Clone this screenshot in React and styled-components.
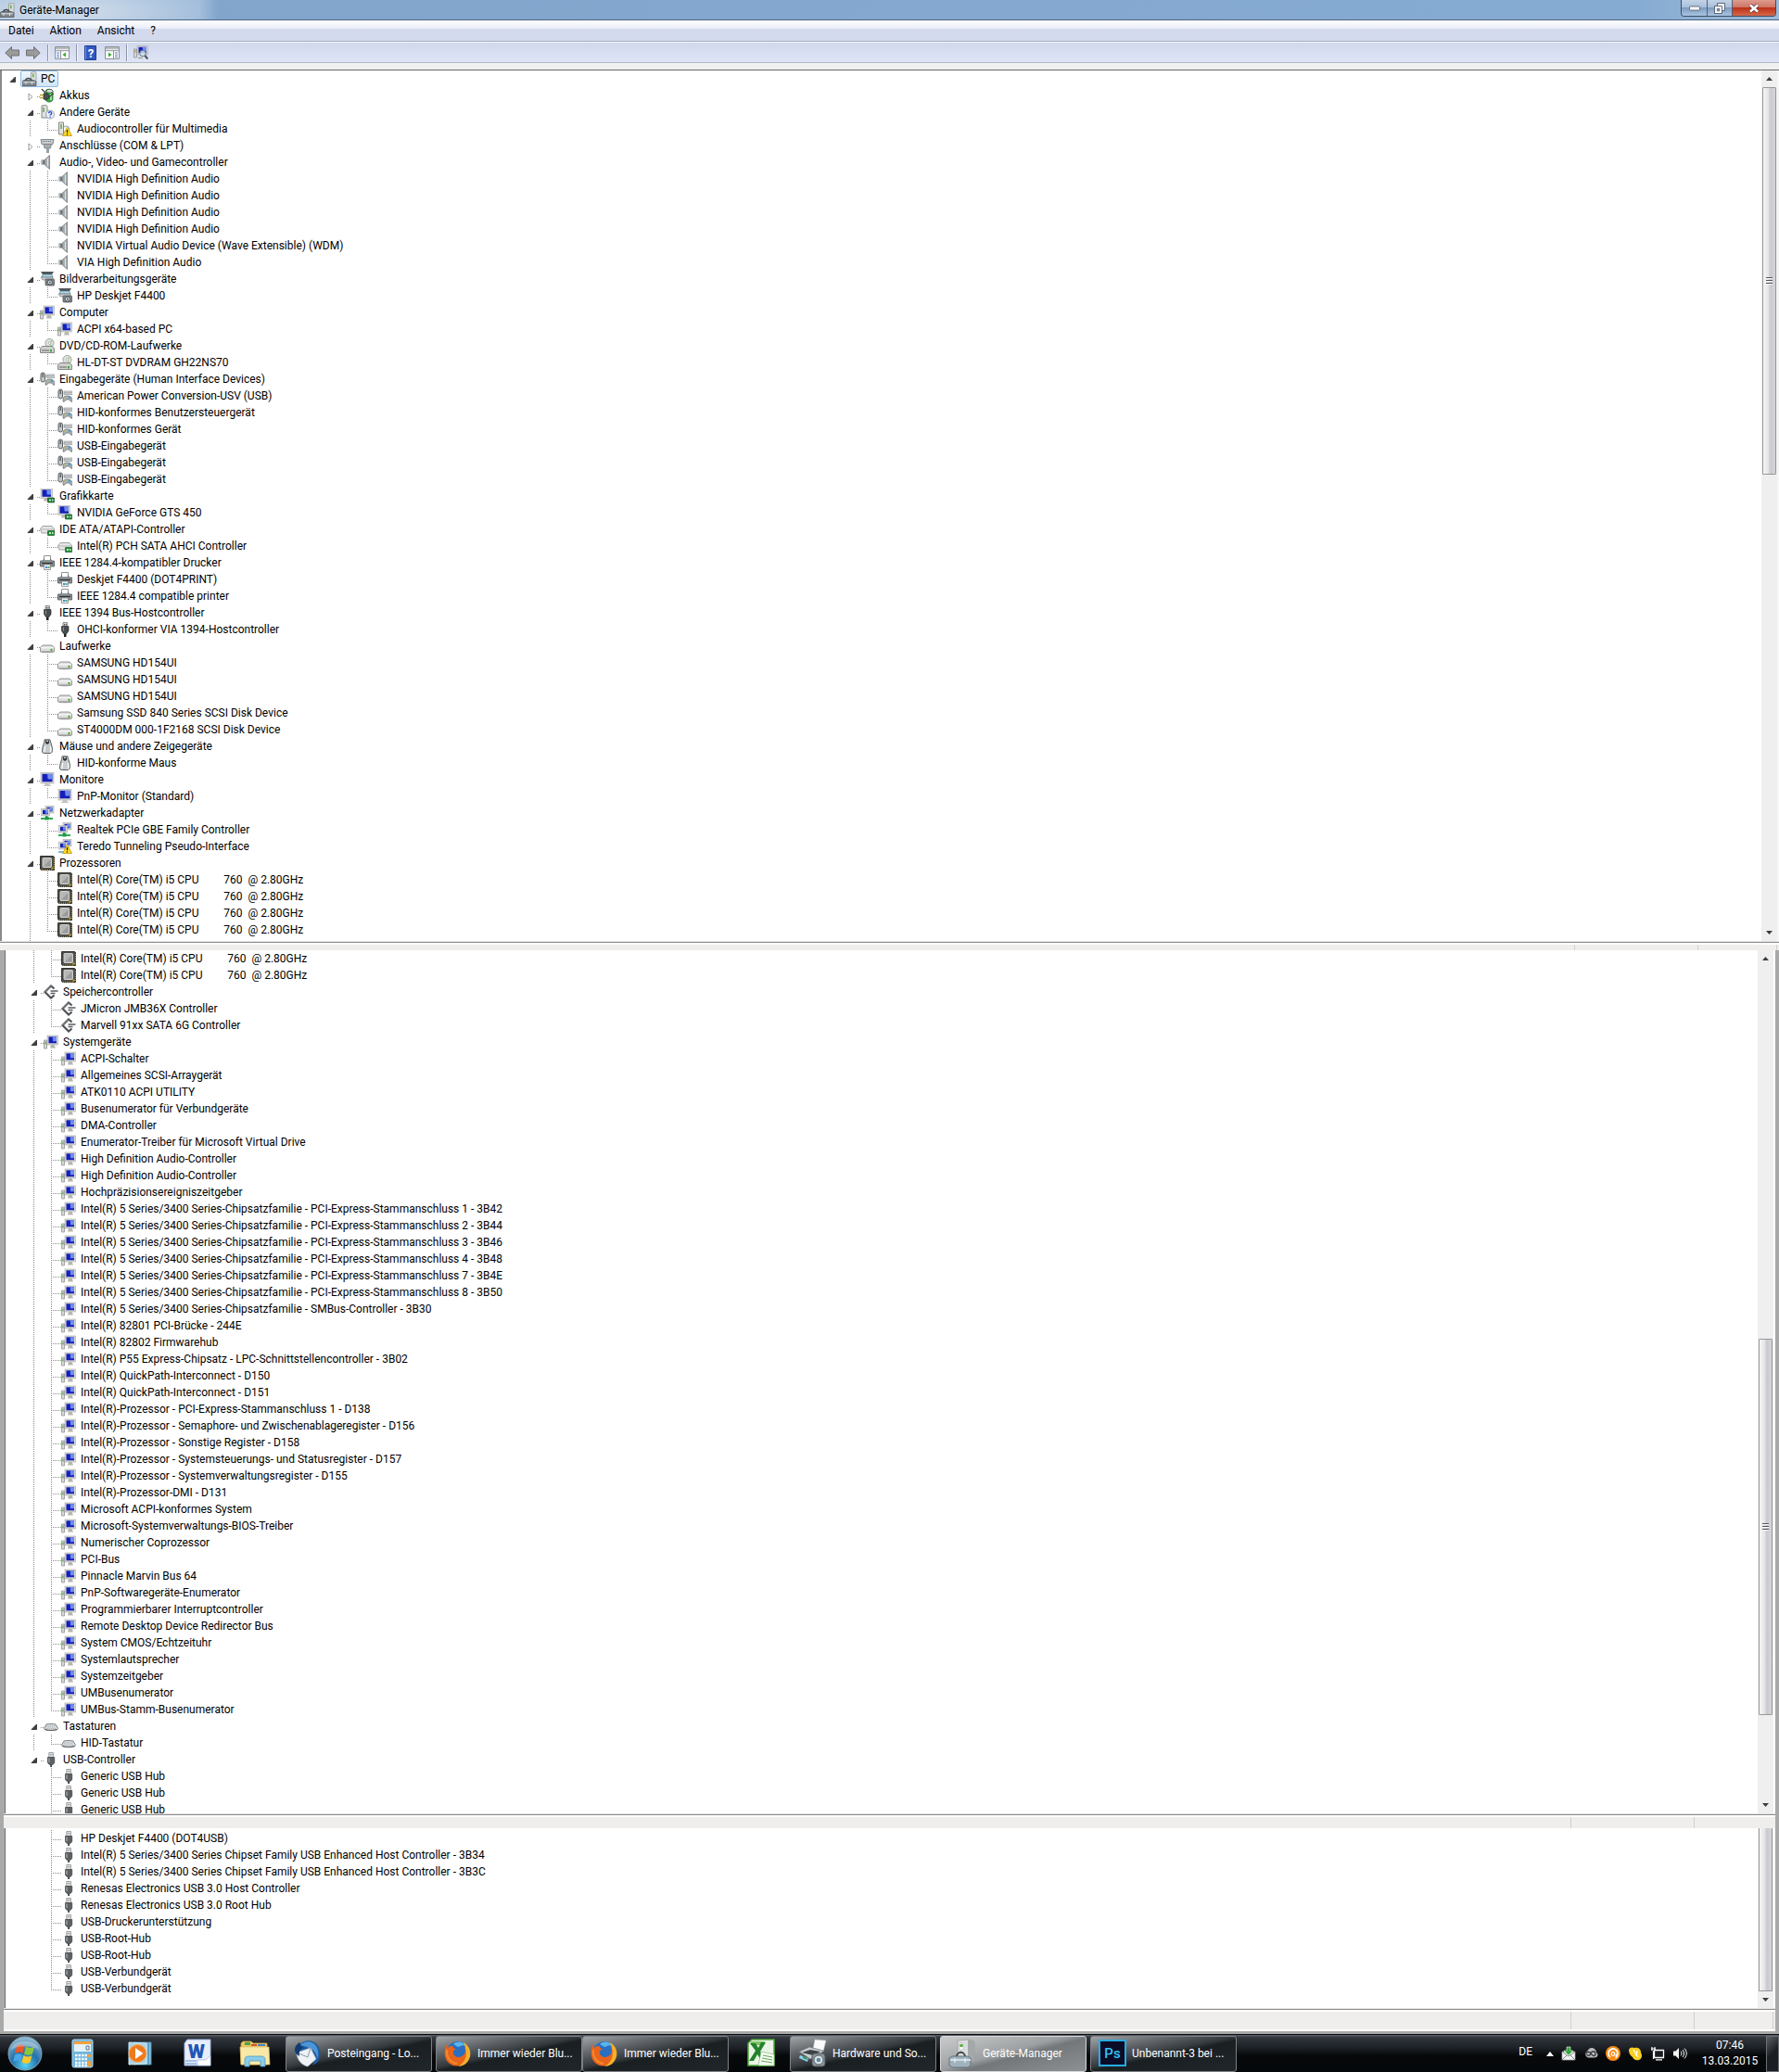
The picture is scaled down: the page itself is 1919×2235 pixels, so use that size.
import React from "react";
import styled, {createGlobalStyle} from "styled-components";

const GlobalStyle = createGlobalStyle`
  * {
    box-sizing: border-box;
  }

  body {
    margin: 0;
    background: #a9a9a9;
    font-family: Roboto, "Noto Sans", sans-serif;
    font-size: 12px;
    color: #000000;
  }

  button {
    font: inherit;
    color: inherit;
    border: 0;
    padding: 0;
    background: none;
  }

  svg {
    display: block;
    flex: none;
  }
`;

const Desktop = styled.div`
  display: flex;
  flex-direction: column;
  min-height: 100vh;
`;

/* ---------- window frame ---------- */

const TitleBar = styled.header`
  display: flex;
  align-items: center;
  height: 22px;
  padding-right: 3px;
  border-bottom: 1px solid #4c6484;
  background: radial-gradient(ellipse 150px 30px at 70px 12px, #cbd9e9 20%, transparent 100%),
  linear-gradient(to right, #a8c1dd 0, #a3bedc 215px, #82a5cc 235px, #86abd2 92%, #9dbad9 100%);
`;

const Title = styled.h1`
  flex: 1;
  margin: 0;
  padding-left: 5px;
  font-size: 12px;
  font-weight: 400;
  line-height: 20px;
`;

const CaptionButtons = styled.div`
  display: flex;
  align-self: flex-start;
  height: 18px;
  border: 1px solid #3d4c63;
  border-top: 0;
  border-radius: 0 0 4px 4px;
  overflow: hidden;
`;

const CaptionButton = styled.button`
  display: flex;
  align-items: center;
  justify-content: center;
  width: ${props => props.$close ? 47 : 27}px;
  background: ${props => props.$close
    ? 'linear-gradient(#dd9c8f 0, #cf7566 45%, #bd3218 50%, #d4694a 100%)'
    : 'linear-gradient(#c2d3e6 0, #a9c0da 45%, #7f9cc0 50%, #a9c4e2 100%)'};

  & + & {
    border-left: 1px solid #4f6078;
  }
`;

const MenuBar = styled.nav`
  display: flex;
  align-items: center;
  gap: 17px;
  height: 23px;
  padding-left: 9px;
  border-bottom: 1px solid #a5acbd;
  background: linear-gradient(#ffffff 0, #e9edf8 9px, #d3daee 9px, #d3daee 100%);
`;

const MenuItem = styled.button`
  line-height: 20px;
`;

const ToolBar = styled.div`
  display: flex;
  align-items: center;
  height: 23px;
  padding-left: 5px;
  gap: 7px;
  border-top: 1px solid #f6f8fc;
  border-bottom: 1px solid #b1b8c6;
  background: linear-gradient(#d1d8ec, #dfe5f7);
`;

const ToolSeparator = styled.span`
  width: 1px;
  height: 18px;
  background: #8d93a1;
  box-shadow: 1px 0 0 #f4f6fb;
`;

const FrameGap = styled.div`
  height: 8px;
  background: #f0f0f0;
  border-bottom: 1px solid #696969;
`;

/* ---------- tree panes ---------- */

const Pane = styled.section`
  display: flex;
  flex: ${props => props.$grow ? 1 : 'none'};
  margin: ${props => props.$inset ? '0 4px 0 5px' : '0'};
  border-left: ${props => props.$inset ? 1 : 2}px solid ${props => props.$inset ? '#6f6f6f' : '#8a8a8a'};
  border-right: ${props => props.$inset ? 1 : 2}px solid #f6f6f6;
  background: #ffffff;
`;

const Tree = styled.ul`
  flex: 1;
  min-width: 0;
  margin: 0;
  padding: ${props => props.$top || 0}px 0 0 0;
  list-style: none;
`;

const Row = styled.li`
  display: flex;
  align-items: flex-start;
  height: ${props => props.$height || 18}px;
  padding-left: ${props => props.$root ? 4 : 23}px;
`;

const dotsDown = 'repeating-linear-gradient(to bottom, #8c8c8c 0 1px, transparent 1px 2px)';
const dotsRight = 'repeating-linear-gradient(to right, #8c8c8c 0 1px, transparent 1px 2px)';

const Guide = styled.span`
  flex: none;
  width: 19px;
  height: 18px;
  background: ${props => props.$line ? `${dotsDown} 7px 0 / 1px 100% no-repeat` : 'none'};
`;

const Branch = styled.span`
  flex: none;
  width: 18px;
  height: 18px;
  background: ${dotsDown} 7px 0 / 1px ${props => props.$last ? '11px' : '100%'} no-repeat,
  ${dotsRight} 9px 10px / 9px 1px no-repeat;
`;

const Stub = styled.span`
  flex: none;
  width: 3px;
  height: 18px;
  background: ${dotsRight} 0 10px / 3px 1px no-repeat;
`;

const Expander = styled.button`
  display: flex;
  align-items: center;
  justify-content: center;
  width: 15px;
  height: 20px;
`;

const Entry = styled.span`
  display: flex;
  align-items: center;
  gap: 5px;
  height: 18px;
  line-height: 18px;
  white-space: pre;
`;

const RootEntry = styled(Entry)`
  gap: 4px;
  margin-left: 1px;
  padding: 0 3px 0 1px;
  border: 1px solid #8db9e0;
  border-radius: 2px;
  background: linear-gradient(#eef6fd, #cfe5f8);
  line-height: 16px;
`;

/* ---------- scroll bar ---------- */

const ScrollBar = styled.div`
  display: flex;
  flex-direction: column;
  width: 17px;
  margin-right: ${props => props.$gap || 0}px;
  padding: 0 1px;
  background: #efefef;
`;

const ScrollArrow = styled.button`
  display: flex;
  align-items: center;
  justify-content: center;
  width: 15px;
  height: 18px;
`;

const Track = styled.span`
  flex: ${props => props.$size} 0 0;
`;

const Thumb = styled.span`
  display: flex;
  flex: ${props => props.$size} 0 0;
  align-items: center;
  justify-content: center;
  border: 1px solid #979797;
  border-top-width: ${props => props.$low ? 0 : 1}px;
  border-radius: 1px;
  background: linear-gradient(to right, #f5f5f5 0, #e6e6e9 40%, #c9c9cf 60%, #d6d6da 100%);
`;

/* both bars sit over the last, half scrolled row of the pane above */
const Edge = styled.div`
  position: relative;
  height: 2px;
  margin: ${props => props.$inset ? '0 4px 0 4px' : '0'};
  background: #e4e4e4;
  border-bottom: 1px solid #8c8c8c;
`;

const Splitter = styled.div`
  position: relative;
  display: flex;
  justify-content: flex-end;
  height: ${props => props.$height}px;
  margin: ${props => props.$inset ? '0 4px 0 4px' : '0'};
  border-top: 2px solid #ffffff;
  border-bottom: ${props => props.$footer ? '2px solid #ffffff' : '0'};
  background: #f0eeed;
  box-shadow: 0 -1px 0 #8c8c8c;
`;

const SplitterCell = styled.span`
  width: ${props => props.$width}px;
  border-left: 1px solid #d2d0cf;
`;

/* ---------- task bar ---------- */

const TaskBar = styled.footer`
  display: flex;
  align-items: center;
  height: 41px;
  margin-top: 3px;
  border-top: 1px solid #0b0d10;
  background: linear-gradient(#5b6067 0, #30353c 3px, #1d2126 14px, #07090b 22px, #05080a 100%);
  color: #ffffff;
`;

const QuickLaunch = styled.div`
  display: flex;
  align-items: center;
  width: 308px;
  padding-left: 8px;
`;

const QuickButton = styled.button`
  display: flex;
  align-items: center;
  justify-content: center;
  width: 62px;
  height: 40px;
`;

const StartButton = styled(QuickButton)`
  width: 38px;
  margin-right: 12px;
`;

const TaskButton = styled.button`
  display: flex;
  align-items: center;
  gap: 6px;
  width: 158px;
  height: 39px;
  margin-right: ${props => props.$stacked ? 0 : 4}px;
  padding-left: 8px;
  border: 1px solid ${props => props.$active ? '#d5d7d9' : '#7d8185'};
  border-radius: 3px;
  background: ${props => props.$active
    ? 'linear-gradient(165deg, #c9cbcc 0, #9da0a2 45%, #74777a 55%, #8e9193 100%)'
    : 'linear-gradient(168deg, #a2a5a8 0, #65696d 25%, #33383c 47%, #1a1f22 53%, #20262a 100%)'};
  white-space: nowrap;
`;

const Tray = styled.div`
  display: flex;
  align-items: center;
  gap: 8px;
  margin-left: auto;
  height: 100%;
`;

const Language = styled.button`
  margin: 0 7px 4px 0;
`;

const Clock = styled.time`
  width: 62px;
  margin-left: 7px;
  text-align: center;
  line-height: 17px;
`;

const ShowDesktop = styled.button`
  width: 14px;
  height: 39px;
  border: 1px solid #6c7075;
  background: linear-gradient(135deg, #5d6166, #1a1d21 50%);
`;

/* ---------- device icons ---------- */

const Svg = ({size = 16, children}) => (
    <svg width={size} height={size} viewBox={`0 0 ${size} ${size}`} aria-hidden="true">{children}</svg>
);

const Warning = () => (
    <g>
        <path d="M10.500 6l5 9.500h-10z" fill="#ffdd22" stroke="#b58a00" strokeWidth=".7"/>
        <path d="M10.500 9v3.300M10.500 13.300v1.200" stroke="#2a2200" strokeWidth="1.300"/>
    </g>
);

const Screen = ({x, y, w, h}) => (
    <g>
        <rect x={x} y={y} width={w} height={h} fill="#d9d9d4" stroke="#a9a9a4" strokeWidth=".6"/>
        <rect x={x + 1.5} y={y + 1.3} width={w - 3} height={h - 3} fill="#1420b8"/>
        <path d={`M${x + w * .5} ${y + 1.3}h${w * .5 - 1.5}v${h * .5}h-${w * .35}z`} fill="#6f8df0"/>
    </g>
);

const icons = {
    root: <Svg>
        <path d="M9.500 1l4.500-1 1 1v11l-5.500 1z" fill="#dcdedd" stroke="#8b8d8c" strokeWidth=".7"/>
        <path d="M11 2.500l1.500-.3v4l-1.500.3z" fill="#67a84a"/>
        <path d="M3.500 10.500C3.500 6.500 10 6.500 10 10.500" fill="none" stroke="#44484b" strokeWidth="1.400"/>
        <path d="M0 11l1.500-1.500h11L15 11v4.500H0z" fill="#7f8689" stroke="#4b5053" strokeWidth=".7"/>
        <path d="M1 11.800h13M4 11v3M10.500 11v3" stroke="#dfe4e6" strokeWidth="1"/>
    </Svg>,
    battery: <Svg>
        <path d="M6 3c2-3 8-2 8 1v8c0 4-8 4-8 0z" fill="#2fae3d" stroke="#3f5a40" strokeWidth=".8"/>
        <ellipse cx="10.500" cy="3.300" rx="3.500" ry="1.800" fill="#dfe8df" stroke="#4b554b" strokeWidth=".8"/>
        <path d="M12 6v7" stroke="#8be38f" strokeWidth="2"/>
        <path d="M4 6c3-1 6 0 6 3s-2 4-6 3z" fill="#4c4f4c" stroke="#222" strokeWidth=".7"/>
        <path d="M10 9c3 0 2-3 5-3" fill="none" stroke="#333" strokeWidth="1.200"/>
        <path d="M0 7.500h4M0 10.500h4" stroke="#b7a427" strokeWidth="1.300"/>
        <path d="M2 1c1 2 3 1 3 4" fill="none" stroke="#333" strokeWidth="1.200"/>
    </Svg>,
    unknown: <Svg>
        <path d="M2 1l5-.5 1 1V14H2z" fill="#e1e3e1" stroke="#858885"/>
        <path d="M4 3v5" stroke="#5fa641" strokeWidth="1.500"/>
        <circle cx="11" cy="10.500" r="4.500" fill="#e9eef8" stroke="#8a97ad" strokeWidth=".9"/>
        <path d="M9.500 9.200c0-2 3.200-2 3.200 0 0 1.300-1.600 1.200-1.600 2.400M11.100 12.500v1.200" fill="none" stroke="#2244b8"
              strokeWidth="1.200"/>
    </Svg>,
    unknownWarn: <Svg>
        <path d="M1.500 1h5v13h-5z" fill="#e1e3e1" stroke="#858885"/>
        <path d="M4 3v5" stroke="#5fa641" strokeWidth="1.500"/>
        <path d="M7 6c3-2 6-1 6 3" fill="none" stroke="#8a97ad"/>
        <Warning/>
    </Svg>,
    port: <Svg>
        <path d="M1 1.500h14l-1 5H2z" fill="#c7cccf" stroke="#777d80" strokeWidth=".9"/>
        <path d="M3 3.500h10" stroke="#6b7174" strokeDasharray="1 1"/>
        <path d="M4 6.500h8.500l-1 4.500H5z" fill="#a5abae" stroke="#777d80" strokeWidth=".7"/>
        <path d="M7 11h3v5H7z" fill="#9aa0a3"/>
    </Svg>,
    speaker: <Svg>
        <path d="M1.500 5.500h4v5h-4z" fill="#6f7578"/>
        <path d="M5 5.500L10.500.5v15L5 10.500z" fill="#a2a8ab" stroke="#6d7376" strokeWidth=".7"/>
        <path d="M8.500 3.500v9" stroke="#dfe3e5" strokeWidth="1.300"/>
        <path d="M2.500 6v4" stroke="#b9bec0"/>
    </Svg>,
    imaging: <Svg>
        <path d="M1 0h14l-2 3H3z" fill="#4f5558"/>
        <path d="M3 3h10l1 3H2z" fill="#a9d7ee" stroke="#5d7380" strokeWidth=".6"/>
        <path d="M1 6h13v3H3z" fill="#c7cbcd" stroke="#777" strokeWidth=".6"/>
        <rect x="6" y="8" width="9.500" height="7" rx="1" fill="#7d8589" stroke="#464b4e" strokeWidth=".7"/>
        <circle cx="10.800" cy="11.500" r="2.500" fill="#e7edf0" stroke="#333" strokeWidth=".8"/>
        <circle cx="10.800" cy="11.500" r="1" fill="#2a4e70"/>
    </Svg>,
    computer: <Svg>
        <Screen x={4} y={1} w={11.5} h={10}/>
        <path d="M8 11h3.500l1.500 3.500H7z" fill="#b6b6b0"/>
        <path d="M.5 6h3v9h-3z" fill="#d6d8d6" stroke="#888" strokeWidth=".7"/>
        <path d="M2 7.500v3" stroke="#4fa83a" strokeWidth="1.200"/>
    </Svg>,
    disc: <Svg>
        <circle cx="10.500" cy="5" r="4.600" fill="#dfe3de" stroke="#8f938f" strokeWidth=".8"/>
        <path d="M10.500 5l3-3M10.500 5l2 3.500" stroke="#9fcf8c" strokeWidth="1.200"/>
        <circle cx="10.500" cy="5" r="1.300" fill="#fff" stroke="#999" strokeWidth=".6"/>
        <path d="M.5 11l2-2.500h11l2 2.500v4.500H.5z" fill="#cdd0cd" stroke="#6f726f" strokeWidth=".8"/>
        <path d="M2 13h8" stroke="#666"/>
        <path d="M12 12v2.500" stroke="#3aa83a" strokeWidth="2"/>
    </Svg>,
    hid: <Svg>
        <rect x="1" y="1" width="4.500" height="10" rx="2.200" fill="#c5c9cc" stroke="#565b5e"/>
        <path d="M3.200 2v4" stroke="#333"/>
        <path d="M7 3h9v3.500H7z" fill="#d3d6d8" stroke="#888d90" strokeWidth=".6"/>
        <path d="M7.500 4.800h8" stroke="#777" strokeDasharray="1 1"/>
        <path d="M6 14c0-5 1-6 4.500-6S16 9 16 14c-1 1-2 0-3-2H9c-1 2-2 3-3 2z" fill="#aeb4b8" stroke="#60666a"
              strokeWidth=".7"/>
        <circle cx="12.800" cy="10" r="1.200" fill="#39a0d8"/>
        <circle cx="8.500" cy="10" r="1" fill="#c9b43a"/>
    </Svg>,
    display: <Svg>
        <Screen x={1} y={0} w={12.5} h={10.5}/>
        <path d="M5 10.500h4l1 3H4z" fill="#b6b6b0"/>
        <path d="M8.500 10h7v5h-7z" fill="#1d7a35" stroke="#0f4d1f" strokeWidth=".6"/>
        <path d="M10 11.500h2v2h-2zM13 11.500h1.500v2H13z" fill="#b9e3c0"/>
    </Svg>,
    ide: <Svg>
        <path d="M.5 7.500l2.500-3h10l2.500 3v4.500H2z" fill="#e5e7e6" stroke="#8a8d8c" strokeWidth=".8"/>
        <path d="M1 8h14" stroke="#b1b4b3"/>
        <path d="M8.500 9.500h7v5h-7z" fill="#1d8a35" stroke="#0f4d1f" strokeWidth=".6"/>
        <path d="M10 11h2v2h-2zM13 11h1.500v2H13z" fill="#c9edc0"/>
    </Svg>,
    printer: <Svg>
        <path d="M4.500 .5h7V6h-7z" fill="#fff" stroke="#777" strokeWidth=".8"/>
        <path d="M.5 6h3l1-2h7l1 2h3v6H.5z" fill="#8f9497" stroke="#515558" strokeWidth=".8"/>
        <path d="M5 1h6v4H5z" fill="#fff"/>
        <path d="M2 8.500h12" stroke="#34383a" strokeWidth="1.500"/>
        <path d="M4.500 10h7v5.500h-7z" fill="#eef3f6" stroke="#777" strokeWidth=".7"/>
        <path d="M6 12h2v2H6z" fill="#3c8ad0"/>
        <path d="M8.500 12h2v2h-2z" fill="#48a867"/>
    </Svg>,
    firewire: <Svg>
        <path d="M6 .5h4.500v4H6z" fill="#d6d8d9" stroke="#777" strokeWidth=".8"/>
        <path d="M7.500 2v1.500M9.200 2v1.500" stroke="#444"/>
        <path d="M4.500 4.500h7.500v5l-2 3h-3.500l-2-3z" fill="#484c4f" stroke="#222" strokeWidth=".6"/>
        <path d="M6.500 5.500v4" stroke="#8f9598"/>
        <path d="M7 12.500h2.500V16H7z" fill="#222"/>
    </Svg>,
    drive: <Svg>
        <path d="M.5 9.500L3 7h10l2.500 2.500v4.500c-3 1-12 1-15 0z" fill="#dcdedd" stroke="#7e8180" strokeWidth=".8"/>
        <path d="M1 9.800h14" stroke="#fff"/>
        <path d="M12.500 10.800v2.500" stroke="#54a832" strokeWidth="2"/>
        <path d="M2 14h12" stroke="#8a8d8c" strokeWidth="1"/>
    </Svg>,
    mouse: <Svg>
        <path d="M5 1c2-1.300 4-1.300 6 0 .5 3 2.500 7 2.500 10.500 0 4-2 4-2.500 4H5c-1 0-3 0-2.500-4C3 8 5 4 5 1z" fill="#c7cbcd"
              stroke="#4b5053" strokeWidth=".9"/>
        <path d="M6 1.500h4v3L8 6 6 4.500z" fill="#2b2f32"/>
        <circle cx="8" cy="2.600" r=".8" fill="#fff"/>
        <path d="M6 8c-1 2-1 4-1 6M11.300 8c1 3 .7 5 .2 6.500" fill="none" stroke="#fff" strokeWidth="1.200"/>
    </Svg>,
    monitor: <Svg>
        <Screen x={1} y={.5} w={14} h={11.5}/>
        <path d="M5.500 12h5v2h1.500v1H4v-1h1.500z" fill="#c2c2bc"/>
    </Svg>,
    network: <Svg>
        <Screen x={6} y={.5} w={9} h={7.5}/>
        <Screen x={1.5} y={3.5} w={9} h={7.5}/>
        <path d="M6 11h2.500v2H14v2H1v-2h5z" fill="#2fae54"/>
        <path d="M5.500 12h4v3.500h-4z" fill="#24984a"/>
    </Svg>,
    networkWarn: <Svg>
        <Screen x={6} y={.5} w={9} h={7.5}/>
        <Screen x={1.5} y={3.5} w={9} h={7.5}/>
        <path d="M1 13h7v2H1z" fill="#7fb7d8"/>
        <Warning/>
    </Svg>,
    cpu: <Svg>
        <path d="M.5 .5h14l1 1v14h-14l-1-1z" fill="#4b4b45" stroke="#33332e"/>
        <path d="M2 15.300h12M15.300 3v11" stroke="#c7a83a" strokeWidth="1" strokeDasharray="1 1"/>
        <rect x="3" y="2.500" width="9.500" height="10" rx=".8" fill="#b5b7b6" stroke="#e3e4e3" strokeWidth=".8"/>
        <path d="M4 11.500L11.500 4v7.500z" fill="#9a9c9b"/>
        <path d="M12.500 12.500h2v2h-2z" fill="#c9a62e"/>
    </Svg>,
    storage: <Svg>
        <path d="M11.500 4.500L8 1.500 1.500 8 8 14.500l3.500-3" fill="none" stroke="#4d5154" strokeWidth="2.200"/>
        <path d="M8 1.500L1.500 8" stroke="#8f9497" strokeWidth="1"/>
        <path d="M7.500 7h8M7.500 9.500h5" stroke="#5a5e61" strokeWidth="1.300"/>
    </Svg>,
    keyboard: <Svg>
        <path d="M.5 10.500L3 6c3-.8 7-.8 10 0l2.500 4.500c0 2.500-15 2.500-15 0z" fill="#dfe1e3" stroke="#707578"
              strokeWidth=".9"/>
        <path d="M3.500 7.200h9M3 8.800h10M2 10.400h12" stroke="#94999c" strokeWidth=".8" strokeDasharray="1 1"/>
        <path d="M1 11.500c3 1.300 11 1.300 14 0" fill="none" stroke="#5b6063"/>
    </Svg>,
    usb: <Svg>
        <path d="M5.800 .5h4.600v5H5.800z" fill="#e3e4e5" stroke="#8a8d8f" strokeWidth=".8"/>
        <path d="M7.300 2v1.300M9 2v1.300" stroke="#777" strokeWidth=".8"/>
        <path d="M4.500 5.500h7.200v5.500c0 1-1.500 2.500-2.500 2.500H7c-1 0-2.500-1.500-2.500-2.500z" fill="#5d6164" stroke="#3a3d3f"
              strokeWidth=".7"/>
        <path d="M6 6.500v4.500" stroke="#a9adaf" strokeWidth="1.200"/>
        <path d="M7.200 13.500h1.800V16H7.200z" fill="#3a3d3f"/>
    </Svg>,
};

const OpenArrow = () => (
    <svg width="8" height="8" viewBox="0 0 8 8" aria-hidden="true">
        <path d="M6.500 1v5.500H1z" fill="#404040" stroke="#262626" strokeWidth=".8"/>
    </svg>
);

const ClosedArrow = () => (
    <svg width="6" height="9" viewBox="0 0 6 9" aria-hidden="true">
        <path d="M1 .9l4 3.600-4 3.600z" fill="#fff" stroke="#8f8f8f" strokeWidth=".9"/>
    </svg>
);

const ArrowUp = () => (
    <svg width="7" height="4" viewBox="0 0 7 4" aria-hidden="true"><path d="M0 4l3.500-4L7 4z" fill="#3c3c3c"/></svg>
);

const ArrowDown = () => (
    <svg width="7" height="4" viewBox="0 0 7 4" aria-hidden="true"><path d="M0 0h7L3.500 4z" fill="#3c3c3c"/></svg>
);

const Grip = () => (
    <svg width="7" height="8" viewBox="0 0 7 8" aria-hidden="true">
        <path d="M0 .5h7M0 3.500h7M0 6.500h7" stroke="#55555a"/>
        <path d="M0 1.500h7M0 4.500h7M0 7.500h7" stroke="#f8f8f8"/>
    </svg>
);

/* ---------- data ---------- */

const group = (label, icon, items = [], extra = {}) => ({label, icon, items, ...extra});
const times = (n, label) => Array(n).fill(label);

const cpu = 'Intel(R) Core(TM) i5 CPU         760  @ 2.80GHz';
const chipset = 'Intel(R) 5 Series/3400 Series-Chipsatzfamilie - ';
const processor = 'Intel(R)-Prozessor - ';

const devicesTop = [
    group('Akkus', 'battery', [], {closed: true}),
    group('Andere Geräte', 'unknown', [{label: 'Audiocontroller für Multimedia', icon: 'unknownWarn'}]),
    group('Anschlüsse (COM & LPT)', 'port', [], {closed: true}),
    group('Audio-, Video- und Gamecontroller', 'speaker', [
        ...times(4, 'NVIDIA High Definition Audio'),
        'NVIDIA Virtual Audio Device (Wave Extensible) (WDM)',
        'VIA High Definition Audio',
    ]),
    group('Bildverarbeitungsgeräte', 'imaging', ['HP Deskjet F4400']),
    group('Computer', 'computer', ['ACPI x64-based PC']),
    group('DVD/CD-ROM-Laufwerke', 'disc', ['HL-DT-ST DVDRAM GH22NS70']),
    group('Eingabegeräte (Human Interface Devices)', 'hid', [
        'American Power Conversion-USV (USB)',
        'HID-konformes Benutzersteuergerät',
        'HID-konformes Gerät',
        ...times(3, 'USB-Eingabegerät'),
    ]),
    group('Grafikkarte', 'display', ['NVIDIA GeForce GTS 450']),
    group('IDE ATA/ATAPI-Controller', 'ide', ['Intel(R) PCH SATA AHCI Controller']),
    group('IEEE 1284.4-kompatibler Drucker', 'printer', ['Deskjet F4400 (DOT4PRINT)', 'IEEE 1284.4 compatible printer']),
    group('IEEE 1394 Bus-Hostcontroller', 'firewire', ['OHCI-konformer VIA 1394-Hostcontroller']),
    group('Laufwerke', 'drive', [
        ...times(3, 'SAMSUNG HD154UI'),
        'Samsung SSD 840 Series SCSI Disk Device',
        'ST4000DM 000-1F2168 SCSI Disk Device',
    ]),
    group('Mäuse und andere Zeigegeräte', 'mouse', ['HID-konforme Maus']),
    group('Monitore', 'monitor', ['PnP-Monitor (Standard)']),
    group('Netzwerkadapter', 'network', [
        'Realtek PCIe GBE Family Controller',
        {label: 'Teredo Tunneling Pseudo-Interface', icon: 'networkWarn'},
    ]),
    group('Prozessoren', 'cpu', times(4, cpu)),
];

const devicesMiddle = [
    group(null, 'cpu', times(2, cpu)),
    group('Speichercontroller', 'storage', ['JMicron JMB36X Controller', 'Marvell 91xx SATA 6G Controller']),
    group('Systemgeräte', 'computer', [
        'ACPI-Schalter',
        'Allgemeines SCSI-Arraygerät',
        'ATK0110 ACPI UTILITY',
        'Busenumerator für Verbundgeräte',
        'DMA-Controller',
        'Enumerator-Treiber für Microsoft Virtual Drive',
        'High Definition Audio-Controller',
        'High Definition Audio-Controller',
        'Hochpräzisionsereigniszeitgeber',
        chipset + 'PCI-Express-Stammanschluss 1 - 3B42',
        chipset + 'PCI-Express-Stammanschluss 2 - 3B44',
        chipset + 'PCI-Express-Stammanschluss 3 - 3B46',
        chipset + 'PCI-Express-Stammanschluss 4 - 3B48',
        chipset + 'PCI-Express-Stammanschluss 7 - 3B4E',
        chipset + 'PCI-Express-Stammanschluss 8 - 3B50',
        chipset + 'SMBus-Controller - 3B30',
        'Intel(R) 82801 PCI-Brücke - 244E',
        'Intel(R) 82802 Firmwarehub',
        'Intel(R) P55 Express-Chipsatz - LPC-Schnittstellencontroller - 3B02',
        'Intel(R) QuickPath-Interconnect - D150',
        'Intel(R) QuickPath-Interconnect - D151',
        processor + 'PCI-Express-Stammanschluss 1 - D138',
        processor + 'Semaphore- und Zwischenablageregister - D156',
        processor + 'Sonstige Register - D158',
        processor + 'Systemsteuerungs- und Statusregister - D157',
        processor + 'Systemverwaltungsregister - D155',
        'Intel(R)-Prozessor-DMI - D131',
        'Microsoft ACPI-konformes System',
        'Microsoft-Systemverwaltungs-BIOS-Treiber',
        'Numerischer Coprozessor',
        'PCI-Bus',
        'Pinnacle Marvin Bus 64',
        'PnP-Softwaregeräte-Enumerator',
        'Programmierbarer Interruptcontroller',
        'Remote Desktop Device Redirector Bus',
        'System CMOS/Echtzeituhr',
        'Systemlautsprecher',
        'Systemzeitgeber',
        'UMBusenumerator',
        'UMBus-Stamm-Busenumerator',
    ]),
    group('Tastaturen', 'keyboard', ['HID-Tastatur']),
    group('USB-Controller', 'usb', [
        ...times(2, 'Generic USB Hub'),
        {label: 'Generic USB Hub', height: 13},
    ], {tail: true, more: true}),
];

const devicesBottom = [
    group(null, 'usb', [
        'HP Deskjet F4400 (DOT4USB)',
        'Intel(R) 5 Series/3400 Series Chipset Family USB Enhanced Host Controller - 3B34',
        'Intel(R) 5 Series/3400 Series Chipset Family USB Enhanced Host Controller - 3B3C',
        'Renesas Electronics USB 3.0 Host Controller',
        'Renesas Electronics USB 3.0 Root Hub',
        'USB-Druckerunterstützung',
        ...times(2, 'USB-Root-Hub'),
        ...times(2, 'USB-Verbundgerät'),
    ], {tail: true}),
];

/* ---------- parts ---------- */

const DeviceGroup = ({data}) => (
    <>
        {data.label && (
            <Row>
                <Expander aria-label={data.label}>{data.closed ? <ClosedArrow/> : <OpenArrow/>}</Expander>
                <Stub/>
                <Entry>{icons[data.icon]}{data.label}</Entry>
            </Row>
        )}
        {data.items.map((item, i) => (
            <Row key={i} $height={item.height}>
                <Guide $line={!data.tail}/>
                <Branch $last={i === data.items.length - 1 && !data.more}/>
                <Entry>{icons[item.icon || data.icon]}{item.label || item}</Entry>
            </Row>
        ))}
    </>
);

const DeviceTree = ({groups, root, top}) => (
    <Tree $top={top}>
        {root && (
            <Row $root>
                <Expander aria-label={root}><OpenArrow/></Expander>
                <RootEntry>{icons.root}{root}</RootEntry>
            </Row>
        )}
        {groups.map((data, i) => <DeviceGroup key={i} data={data}/>)}
        {root && <Row $height={3}><Guide $line/></Row>}
    </Tree>
);

const TaskIcon = ({children, width = 30}) => (
    <svg width={width} height="32" viewBox={`0 0 ${width} 32`} aria-hidden="true">{children}</svg>
);

const Firefox = () => (
    <TaskIcon>
        <circle cx="15" cy="15" r="12" fill="#2a6fc0"/>
        <path d="M10 6c4-4 11-3 14 2-5-2-6 1-9 1z" fill="#58b4ea"/>
        <path d="M3 6c0 2 0 3 1 4 2-2 4-2 6-2-1 2 1 3 3 3-2 2-4 2-3 5 1 4 6 5 9 3 4-2 5-6 3-10 5 3 5 9 3 13-3 7-12 10-19 5C-1 22 0 11 3 6z"
              fill="#e8641b"/>
        <path d="M21 4c7 4 9 12 6 18-2 5-7 8-12 8 8-4 12-13 6-26z" fill="#f6b02c"/>
        <path d="M3 12c-1 8 4 14 11 15" fill="none" stroke="#f58a2a" strokeWidth="2"/>
    </TaskIcon>
);

const Thunderbird = () => (
    <TaskIcon>
        <path d="M5 8C10 1 21 0 26 8c5 9 2 18-6 21 3-5 2-9-2-13L3 14c0-2 1-4 2-6z" fill="#1c5a9e"/>
        <path d="M7 7C12 2 20 2 24 8c3 5 3 10 1 14 0-7-4-12-18-15z" fill="#4b95d6"/>
        <path d="M3 15l15-5 6 12-9 8c-6-1-12-7-12-15z" fill="#eef1f5" stroke="#a9b3c0" strokeWidth=".7"/>
        <path d="M3 15l12 5 3-10" fill="none" stroke="#8b97a8"/>
        <path d="M1 12c0-4 3-7 6-8-1 3 1 5 4 6-4 0-6 4-5 9-3-2-5-4-5-7z" fill="#123a70"/>
    </TaskIcon>
);

const Photoshop = () => (
    <TaskIcon>
        <rect x="1" y="2" width="28" height="27" fill="#0b0d26" stroke="#29abe2" strokeWidth="2"/>
        <text x="15" y="21" fill="#36c3f7" fontSize="15" fontWeight="500" textAnchor="middle">Ps</text>
    </TaskIcon>
);

const Hardware = () => (
    <TaskIcon width={31}>
        <path d="M18 1l12 1-3 12-11-3z" fill="#fafafa" stroke="#bbb" strokeWidth=".6"/>
        <path d="M1 14l11-5 15 4-4 6-10 3z" fill="#c8cdd1" stroke="#74797c" strokeWidth=".8"/>
        <path d="M4 15l9-3 11 2-8 4z" fill="#3d4246"/>
        <path d="M2 18l9 3-1 4-9-4z" fill="#8ed0f0"/>
        <path d="M5 19l5 2v2l-5-2z" fill="#2e9a4a"/>
        <rect x="15" y="16" width="14" height="14" rx="3" fill="#8b949a" stroke="#4e5559"/>
        <circle cx="22" cy="23" r="5" fill="#d9e2e8" stroke="#59636a"/>
        <circle cx="22" cy="23" r="2.300" fill="#62879e"/>
    </TaskIcon>
);

const DeviceManager = () => (
    <TaskIcon width={31}>
        <path d="M10 2l12-1 6 2v20l-7 3-11-2z" fill="#dadddd" stroke="#9b9f9f" strokeWidth=".8"/>
        <path d="M21 1l7 2v20l-7 3z" fill="#a5a8a8"/>
        <path d="M12 5h4v7h-4z" fill="#fff" stroke="#aaa" strokeWidth=".5"/>
        <circle cx="14" cy="7.500" r="1.800" fill="#56a832"/>
        <path d="M9 20c0-7 9-7 9 0" fill="none" stroke="#3c4144" strokeWidth="1.800"/>
        <path d="M1 21l3-2h17l3 2v8l-3 2H4l-3-2z" fill="#9fb2be" stroke="#566670" strokeWidth=".8"/>
        <path d="M2 23h22M7 21v5M18 21v5" stroke="#e6eef2" strokeWidth="1.300"/>
    </TaskIcon>
);

const tasks = [
    {label: 'Posteingang - Lo...', icon: <Thunderbird/>},
    {label: 'Immer wieder Blu...', icon: <Firefox/>, stacked: true},
    {label: 'Immer wieder Blu...', icon: <Firefox/>},
    {
        label: 'Microsoft Excel', pinned: true, icon: (
            <TaskIcon>
                <path d="M5 1h24v28H1V5z" fill="#e9f4e6" stroke="#4fa83d" strokeWidth="1.500"/>
                <path d="M4 3h15l-2 4H4z" fill="#7cc55e"/>
                <path d="M3 5h6l3 5 3-6h5l-6 10 6 8h-6l-3-5-4 7H2l7-11z" fill="#23822b"/>
                <path d="M15 14l14 3v12H12z" fill="#f8fcf6" stroke="#83bb76" strokeWidth=".7"/>
                <path d="M17 18l10 2M16 21l11 2M15 24l12 2" stroke="#5ba84d"/>
            </TaskIcon>
        )
    },
    {label: 'Hardware und So...', icon: <Hardware/>},
    {label: 'Geräte-Manager', icon: <DeviceManager/>, active: true},
    {label: 'Unbenannt-3 bei ...', icon: <Photoshop/>},
];

const trayIcons = [
    <Svg key="mail">
        <path d="M1 6h14v9H1z" fill="#f2f2f2" stroke="#aaa" strokeWidth=".7"/>
        <path d="M1 6l7 5 7-5M1 15l5-5M15 15l-5-5" fill="none" stroke="#8a8a8a"/>
        <path d="M6 1h4v4h3l-5 5-5-5h3z" fill="#2fa53c" stroke="#d9f2da" strokeWidth=".7"/>
    </Svg>,
    <Svg key="cloud">
        <path d="M5 12.500A4 4 0 0 1 4.500 5C7-.500 14 2 14 7c3 2 1 5.500-2 5.500z" fill="#b9babb"/>
        <path d="M3 8.500c0-3 4-3 5.500 0s5 2.500 4.500-.5-4-3-5 0-3.500 3-4.500 1" fill="none" stroke="#36393c"
              strokeWidth="1.300"/>
    </Svg>,
    <Svg key="avast">
        <circle cx="8" cy="8" r="8" fill="#f78b12"/>
        <path d="M5 12a5 5 0 1 1 6.500-.5V8.500" fill="none" stroke="#fff" strokeWidth="1.800"/>
        <circle cx="8" cy="8.500" r="1.800" fill="none" stroke="#fff" strokeWidth="1.200"/>
    </Svg>,
    <Svg key="shield">
        <path d="M1 4c1-3 4-3 6-2 4-1 7 1 7 5 2 3 1 7-2 8-4 1-6-1-7-3-3-2-4-5-4-8z" fill="#f8cf24"/>
        <path d="M6 4l5 8M10 5l-1 6" stroke="#fff" strokeWidth="1.300"/>
    </Svg>,
    <Svg key="net">
        <path d="M4.500 4.500h10v8h-10z" fill="#1a1d20" stroke="#fff" strokeWidth="1.300"/>
        <path d="M6 14.800h7M2 1v4M5 1v4M1 3h5M3.500 5v9" stroke="#fff" strokeWidth="1.200"/>
    </Svg>,
    <Svg key="volume">
        <path d="M1 5.500h2.500L7 2v12l-3.500-3.500H1z" fill="#f4f4f4"/>
        <path d="M9 5.500c1.300 1.500 1.300 3.500 0 5M11 4c2 2.500 2 5.500 0 8M13 2.500c3 3.500 3 7.500 0 11" fill="none" stroke="#fff"
              strokeWidth="1"/>
    </Svg>,
];

const App = () => (
    <Desktop>
        <GlobalStyle/>
        <TitleBar>
            {icons.root}
            <Title>Geräte-Manager</Title>
            <CaptionButtons>
                <CaptionButton aria-label="Minimieren">
                    <svg width="12" height="6" viewBox="0 0 12 6">
                        <rect x=".5" y="1" width="11" height="4" rx="1" fill="#fff" stroke="#4b5668" strokeWidth=".8"/>
                    </svg>
                </CaptionButton>
                <CaptionButton aria-label="Verkleinern">
                    <svg width="12" height="12" viewBox="0 0 12 12">
                        <path d="M3.500.5h8v8h-8z" fill="#fff" stroke="#4b5668" strokeWidth=".9"/>
                        <path d="M.5 3.500h8v8h-8z" fill="#fff" stroke="#4b5668" strokeWidth=".9"/>
                        <path d="M3.300 6.300h2.500v2.500H3.300z" fill="#8fa9c9" stroke="#4b5668" strokeWidth=".8"/>
                    </svg>
                </CaptionButton>
                <CaptionButton $close aria-label="Schließen">
                    <svg width="12" height="10" viewBox="0 0 12 10">
                        <path d="M2 1.500l8 7M10 1.500l-8 7" stroke="#56333a" strokeWidth="4"/>
                        <path d="M2 1.500l8 7M10 1.500l-8 7" stroke="#fff" strokeWidth="2.600"/>
                    </svg>
                </CaptionButton>
            </CaptionButtons>
        </TitleBar>
        <MenuBar>
            {['Datei', 'Aktion', 'Ansicht', '?'].map(name => <MenuItem key={name}>{name}</MenuItem>)}
        </MenuBar>
        <ToolBar>
            <button aria-label="Zurück">
                <Svg><path d="M.8 8l6.700-6.500V5h8v6h-8v3.500z" fill="#9b9b9b" stroke="#666" strokeWidth=".9"/></Svg>
            </button>
            <button aria-label="Vorwärts">
                <Svg><path d="M15.200 8L8.500 1.500V5h-8v6h8v3.500z" fill="#9b9b9b" stroke="#666" strokeWidth=".9"/></Svg>
            </button>
            <ToolSeparator/>
            <button aria-label="Konsolenstruktur">
                <Svg>
                    <path d="M.5 1.500h15v13H.5z" fill="#fdfdfd" stroke="#8d9094"/>
                    <path d="M1 3h14M1 5.500h14" stroke="#a4a8ad" strokeWidth="1.500"/>
                    <path d="M6.500 6v8" stroke="#8d9094"/>
                    <path d="M2 8h3M2 10.300h3M2 12.500h3" stroke="#4d7fc0"/>
                    <path d="M12 7.500v5L8.500 10z" fill="#35a832"/>
                </Svg>
            </button>
            <ToolSeparator/>
            <button aria-label="Hilfe">
                <Svg>
                    <path d="M1.500 .5h12v15h-12z" fill="#3159c4" stroke="#1f3a8c"/>
                    <path d="M2.500 1v14" stroke="#7d9ae8"/>
                    <text x="8" y="13" fill="#fff" fontSize="13" fontWeight="700" textAnchor="middle">?</text>
                </Svg>
            </button>
            <button aria-label="Aktionsbereich">
                <Svg>
                    <path d="M.5 1.500h15v13H.5z" fill="#fdfdfd" stroke="#8d9094"/>
                    <path d="M1 3h14M1 5.500h14" stroke="#a4a8ad" strokeWidth="1.500"/>
                    <path d="M9.500 6v8" stroke="#8d9094"/>
                    <path d="M11 8h3M11 10.300h3M11 12.500h3" stroke="#4d7fc0"/>
                    <path d="M4 7.500v5L7.500 10z" fill="#35a832"/>
                </Svg>
            </button>
            <ToolSeparator/>
            <button aria-label="Nach geänderter Hardware suchen">
                <Svg>
                    <Screen x={4} y={.5} w={11.5} h={9.5}/>
                    <path d="M.5 4h3v9h-3z" fill="#d6d8d6" stroke="#888" strokeWidth=".7"/>
                    <path d="M2 5v3" stroke="#b8a832" strokeWidth="1.200"/>
                    <circle cx="10" cy="8.500" r="3.300" fill="#cfe6f6" fillOpacity=".8" stroke="#6d7780"/>
                    <path d="M12.300 11l3 3.500" stroke="#4c5258" strokeWidth="2"/>
                    <path d="M5 13.500h5" stroke="#a5a7a4" strokeWidth="1.500"/>
                </Svg>
            </button>
        </ToolBar>
        <FrameGap/>

        <Pane>
            <DeviceTree groups={devicesTop} root="PC"/>
            <ScrollBar>
                <ScrollArrow aria-label="Nach oben"><ArrowUp/></ScrollArrow>
                <Thumb $size={417}><Grip/></Thumb>
                <Track $size={486}/>
                <ScrollArrow aria-label="Nach unten"><ArrowDown/></ScrollArrow>
            </ScrollBar>
        </Pane>
        <Edge/>
        <Splitter $height={8}>
            <SplitterCell $width={133}/>
            <SplitterCell $width={85}/>
            <SplitterCell $width={3}/>
        </Splitter>

        <Pane $inset>
            <DeviceTree groups={devicesMiddle}/>
            <ScrollBar $gap={1}>
                <ScrollArrow aria-label="Nach oben"><ArrowUp/></ScrollArrow>
                <Track $size={401}/>
                <Thumb $size={405}><Grip/></Thumb>
                <Track $size={88}/>
                <ScrollArrow aria-label="Nach unten"><ArrowDown/></ScrollArrow>
            </ScrollBar>
        </Pane>
        <Edge $inset/>
        <Splitter $inset $height={14}>
            <SplitterCell $width={133}/>
            <SplitterCell $width={88}/>
        </Splitter>

        <Pane $inset $grow>
            <DeviceTree groups={devicesBottom} top={2}/>
            <ScrollBar $gap={1}>
                <Thumb $low $size={1}/>
                <ScrollArrow aria-label="Nach unten"><ArrowDown/></ScrollArrow>
            </ScrollBar>
        </Pane>
        <Edge $inset/>
        <Splitter $inset $footer $height={23}>
            <SplitterCell $width={133}/>
            <SplitterCell $width={85}/>
            <SplitterCell $width={3}/>
        </Splitter>

        <TaskBar>
            <QuickLaunch>
                <StartButton aria-label="Start">
                    <svg width="38" height="38" viewBox="0 0 38 38">
                        <defs>
                            <radialGradient id="orb" cx=".5" cy=".85" r=".8">
                                <stop offset="0" stopColor="#58d3f5"/>
                                <stop offset=".5" stopColor="#2470a8"/>
                                <stop offset="1" stopColor="#8fb6cd"/>
                            </radialGradient>
                        </defs>
                        <circle cx="19" cy="19" r="18" fill="url(#orb)" stroke="#7fa5b8"/>
                        <path d="M10 11c3-2 6-2 8.500 0l-2 8c-2-2-5-2-8 0z" fill="#e8562a"/>
                        <path d="M20 11.500c3 2 6 2 9 0l-2 8c-3 2-6 1.500-9 0z" fill="#8cc63c"/>
                        <path d="M8 20.500c3-2 6-1.500 8 0l-2 7.500c-2-2-5-2-8 0z" fill="#48a7e8"/>
                        <path d="M17.500 21c3 2 6 2 9 0l-2 7.500c-3 2-6 1.500-9 0z" fill="#fcc728"/>
                        <path d="M4 15C6 3 32 3 34 15c-8-5-22-5-30 0z" fill="#fff" fillOpacity=".3"/>
                    </svg>
                </StartButton>
                <QuickButton aria-label="Rechner">
                    <TaskIcon width={24}>
                        <rect x="1" y="1" width="22" height="30" rx="2" fill="#6fb4dc" stroke="#b5dcf0"/>
                        <path d="M3 3h18v3H3z" fill="#f2a23c"/>
                        <path d="M3 6h18v8H3z" fill="#e3f1f8"/>
                        <path d="M16 8h3v4h-3z" fill="none" stroke="#5a7788"/>
                        <path d="M4 18h13M4 22h13M4 26h13M4 29h13" stroke="#f4fbff" strokeWidth="2.500"
                              strokeDasharray="2.500 1"/>
                        <path d="M18 17h3v3h-3zM18 24h3v6h-3z" fill="#f2a23c"/>
                    </TaskIcon>
                </QuickButton>
                <QuickButton aria-label="Media Player">
                    <TaskIcon width={26}>
                        <path d="M6 4h19v24H6z" fill="#8cc4e0" stroke="#4e8fb4"/>
                        <path d="M22 5v22" stroke="#5a9ec4" strokeWidth="2"/>
                        <path d="M1 4l19 1v22L1 28z" fill="#a9d4e8" stroke="#d3ebf5"/>
                        <circle cx="10.500" cy="16" r="9.500" fill="#ee7a1c" stroke="#f9b26a"/>
                        <path d="M8 10l8.500 6L8 22z" fill="#fff"/>
                    </TaskIcon>
                </QuickButton>
                <QuickButton aria-label="Word">
                    <TaskIcon>
                        <path d="M4 1h25v28H1V5z" fill="#e8eef9" stroke="#9ab3dd"/>
                        <text x="14" y="21" fill="#1e56b4" fontSize="21" fontWeight="900" textAnchor="middle">W</text>
                        <path d="M15 23h9l5-5v11H15z" fill="#fff" stroke="#9ab3dd" strokeWidth=".7"/>
                        <path d="M2 24h12M2 27h12" stroke="#6d92d0"/>
                    </TaskIcon>
                </QuickButton>
                <QuickButton aria-label="Explorer">
                    <TaskIcon width={34}>
                        <path d="M2 5l2-2h9l2 2h15v23H2z" fill="#e9c765" stroke="#c59c3a" strokeWidth=".8"/>
                        <path d="M6 4h6v3H6z" fill="#49a34a"/>
                        <path d="M13 6h6v2h-6z" fill="#d8502e"/>
                        <path d="M20 6h8v2h-8z" fill="#3d86c8"/>
                        <path d="M1 9h31l1 19H2z" fill="#f9e9a6" stroke="#dcbb62" strokeWidth=".7"/>
                        <path d="M6 30V22c0-2 2-3 4-3h14c2 0 4 1 4 3v8h-5v-6H11v6z" fill="#8ccbe8" stroke="#4b9cc4"
                              strokeWidth=".8"/>
                    </TaskIcon>
                </QuickButton>
            </QuickLaunch>
            {tasks.map((task, i) => task.pinned ? (
                <QuickButton key={i} aria-label={task.label}>{task.icon}</QuickButton>
            ) : (
                <TaskButton key={i} $active={task.active} $stacked={task.stacked}>
                    {task.icon}
                    {task.label}
                </TaskButton>
            ))}
            <Tray>
                <Language>DE</Language>
                <svg width="8" height="5" viewBox="0 0 8 5"><path d="M0 5l4-5 4 5z" fill="#fff"/></svg>
                {trayIcons}
                <Clock>07:46<br/>13.03.2015</Clock>
                <ShowDesktop aria-label="Desktop anzeigen"/>
            </Tray>
        </TaskBar>
    </Desktop>
);

export default App;
